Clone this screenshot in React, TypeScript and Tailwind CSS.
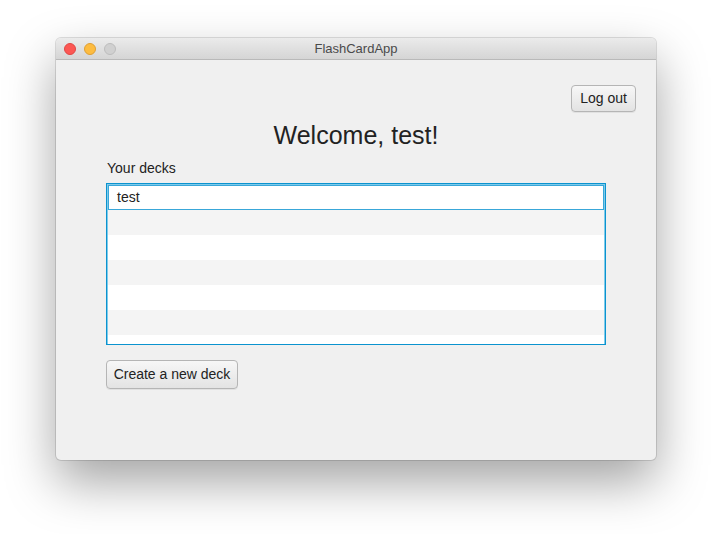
import React from "react";

const rows = ["test", "", "", "", "", "", ""];

function MacButton({ label, className }: { label: string; className?: string }) {
  return (
    <button
      className={
        "rounded-[4px] border border-[#b5b5b5] bg-gradient-to-b from-[#f7f7f7] to-[#e3e3e3] text-[14px] text-[#222] shadow-[0_1px_0_rgba(0,0,0,0.06)] " +
        (className ?? "")
      }
    >
      {label}
    </button>
  );
}

export default function App() {
  return (
    <div
      className="w-[712px] h-[534px] bg-white pt-[38px] pl-[56px] overflow-hidden"
      style={{ fontFamily: '"Liberation Sans", Arial, sans-serif' }}
    >
      <div className="w-[600px] h-[422px] rounded-[5px] overflow-hidden bg-[#f0f0f0] shadow-[0_22px_50px_rgba(0,0,0,0.36),0_0_0_1px_rgba(0,0,0,0.12)] flex flex-col">
        {/* title bar */}
        <div className="relative h-[22px] shrink-0 bg-gradient-to-b from-[#ebebeb] to-[#d5d5d5] border-b border-[#b9b9b9] flex items-center justify-center">
          <div className="absolute left-[8px] top-[5px] flex gap-[8px]">
            <span className="w-[12px] h-[12px] rounded-full bg-[#fc5753] border border-[#df4744]" />
            <span className="w-[12px] h-[12px] rounded-full bg-[#fdbc40] border border-[#de9f34]" />
            <span className="w-[12px] h-[12px] rounded-full bg-[#d0d0d0] border border-[#bcbcbc]" />
          </div>
          <span className="text-[13px] leading-[22px] pt-[1px] text-[#4a4a4a]">FlashCardApp</span>
        </div>

        {/* content */}
        <div className="flex flex-col flex-1">
          <div className="flex justify-end pt-[25px] pr-[20px]">
            <MacButton label="Log out" className="w-[65px] h-[27px]" />
          </div>
          <div className="text-center text-[25px] leading-[30px] text-[#222] mt-[8px]">Welcome, test!</div>
          <div className="px-[50px]">
            <div className="text-[14px] leading-[18px] text-[#222] mt-[9px] ml-[1px]">Your decks</div>
            <div className="mt-[6px] h-[162px] border border-[#0b93cf] shadow-[inset_0_0_0_1px_#7fcbea] bg-white p-[1px] overflow-hidden">
              {rows.map((r, i) => (
                <div
                  key={i}
                  className={
                    "h-[25px] text-[14px] flex items-center pl-[8px] text-[#222] " +
                    (i === 0
                      ? "bg-white border border-[#39a7d9]"
                      : i % 2 === 1
                        ? "bg-[#f4f4f4]"
                        : "bg-white")
                  }
                >
                  {r}
                </div>
              ))}
            </div>
            <MacButton label="Create a new deck" className="mt-[15px] w-[132px] h-[29px]" />
          </div>
        </div>
      </div>
    </div>
  );
}
